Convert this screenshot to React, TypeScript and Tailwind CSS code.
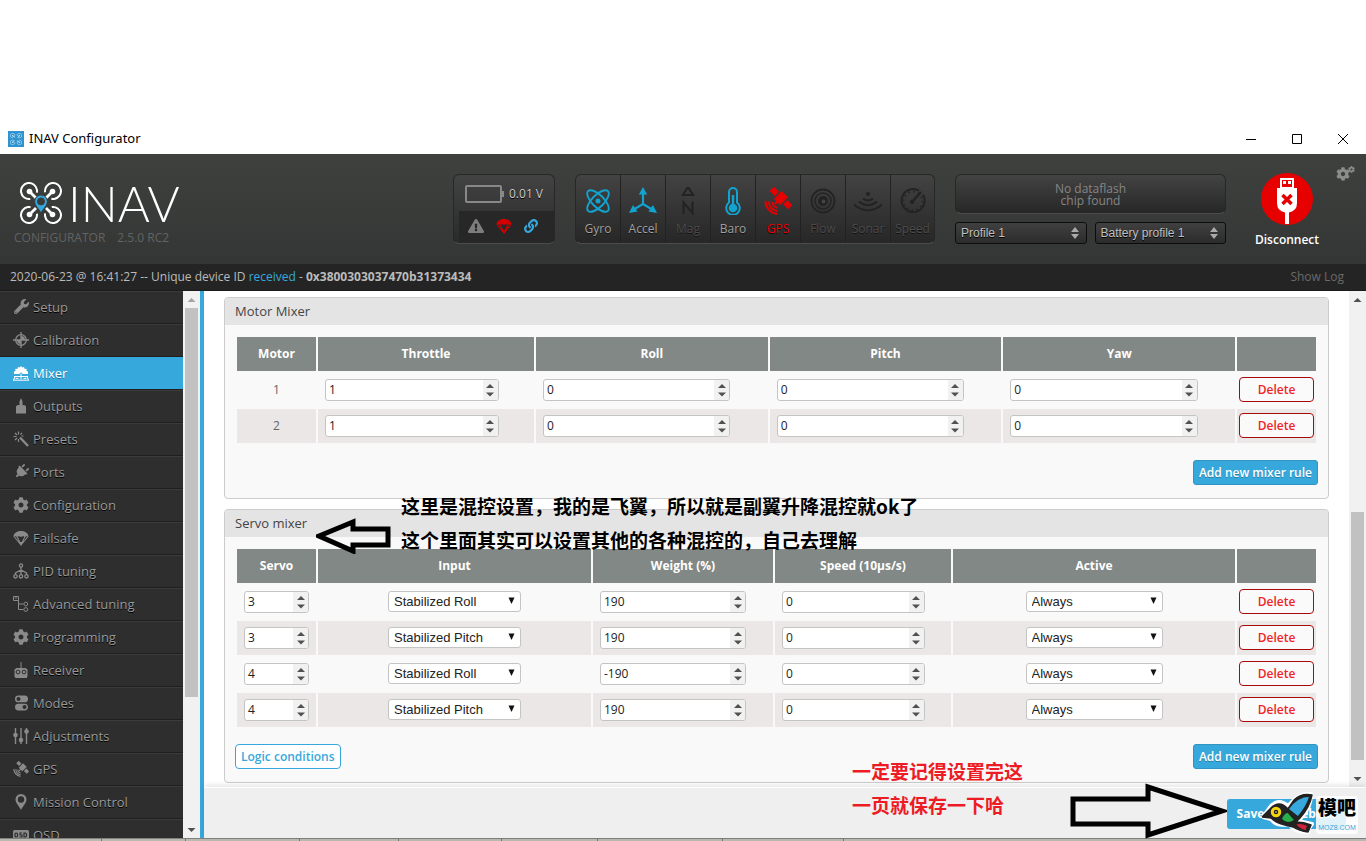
import React from "react";
import { FaWrench, FaMagic, FaPlug, FaCog, FaExclamationTriangle, FaLink } from "react-icons/fa";

const Parachute = ({ className }: { className?: string }) => (
  <svg viewBox="0 0 16 16" className={className} fill="currentColor">
    <path d="M.5 7C.5 3.500 3.500 1 8 1s7.500 2.500 7.500 6q-1.800-1.500-3.300 0Q10 5.500 8 7 6 5.500 3.800 7 2.300 5.500.5 7z" />
    <path d="M1 6.500 7.600 14.500M4 6.500l3.800 8M12 6.500l-3.800 8M15 6.500 8.400 14.500" stroke="currentColor" strokeWidth="1.100" fill="none" />
    <path d="M6.500 12h3l-.8 3.500H7.300z" />
  </svg>
);

const Satellite = ({ className }: { className?: string }) => (
  <svg viewBox="0 0 28 28" className={className} fill="currentColor">
    <g transform="rotate(45 17 11)">
      <path d="M4 8h7v6H4zM12.500 5.500h9v11h-9zM23 8h7v6h-7z" />
      <path d="M16 16h2v4h-2z" />
    </g>
    <path d="M8.500 15a5 5 0 0 0 5 5.500M5 14.500a9 9 0 0 0 8.500 9.500M1.500 14a13 13 0 0 0 11.500 13" fill="none" stroke="currentColor" strokeWidth="2" />
  </svg>
);

const Quad = ({ className, color }: { className?: string; color: string }) => (
  <svg viewBox="0 0 42 42" className={className} fill="none" stroke={color}>
    <g strokeWidth="2" strokeDasharray="40.300 10">
      <circle cx="9" cy="9" r="8" transform="rotate(81 9 9)" />
      <circle cx="33" cy="9" r="8" transform="rotate(171 33 9)" />
      <circle cx="33" cy="33" r="8" transform="rotate(261 33 33)" />
      <circle cx="9" cy="33" r="8" transform="rotate(-9 9 33)" />
    </g>
    <path d="m9 9 7 7M33 9l-7 7M9 33l7-7M33 33l-7-7" strokeWidth="2.800" />
    <g fill={color} stroke="none">
      <circle cx="9.500" cy="9.500" r="2.800" />
      <circle cx="32.500" cy="9.500" r="2.800" />
      <circle cx="9.500" cy="32.500" r="2.800" />
      <circle cx="32.500" cy="32.500" r="2.800" />
    </g>
  </svg>
);

const stroke = { fill: "none", stroke: "currentColor" } as const;

const icons: Record<string, React.ReactNode> = {
  Setup: <FaWrench className="size-[15px]" />,
  Calibration: (
    <svg viewBox="0 0 16 16" className="size-4">
      <g {...stroke} strokeWidth="1.300">
        <circle cx="8" cy="8" r="5.300" />
        <path d="M8 0v16M0 8h16" />
      </g>
      <path d="M8 8V4a4 4 0 0 1 4 4zM8 8v4a4 4 0 0 1-4-4z" fill="currentColor" />
    </svg>
  ),
  Mixer: (
    <svg viewBox="0 0 16 16" className="size-4">
      <path d="M1 9V6.500L2.500 6 2.300 3.800l2 .2.700-2 2 .5L8 .8l1 1.700 2-.5.700 2 2-.2-.2 2.200 1.500.5V9H9.500a1.500 1.500 0 0 0-3 0z" fill="currentColor" />
      <path d="M1 11.500h14M8 8.500v6M0 15.200h16M2.500 13.400h3M10.500 13.400h3M2 11.500l-1.500 3.500M14 11.500l1.500 3.500" {...stroke} strokeWidth="1" />
    </svg>
  ),
  Outputs: (
    <svg viewBox="0 0 16 16" className="size-4" fill="currentColor">
      <path d="M8 0 9.500 3.500v3.500l2.500.3 1 1.200v7H3v-7l1-1.200L6.500 7V3.500z" />
    </svg>
  ),
  Presets: (
    <svg viewBox="0 0 16 16" className="size-4" {...stroke}>
      <path d="m7 6.500 8 8.500" strokeWidth="2.400" />
      <path d="M5.500.5v3M5.500 8v3M.5 5.500h3M8.500 5h2M2 2l2 2M9 2 7.500 3.500M2 9l2-2" strokeWidth="1.200" />
    </svg>
  ),
  Ports: <FaPlug className="size-[15px] rotate-45" />,
  Configuration: <FaCog className="size-4" />,
  Failsafe: <Parachute className="size-4" />,
  "PID tuning": (
    <svg viewBox="0 0 16 16" className="size-4" {...stroke} strokeWidth="1.300">
      <circle cx="8" cy="2.500" r="1.600" />
      <circle cx="2.500" cy="13.300" r="1.700" />
      <circle cx="8" cy="13.300" r="1.700" />
      <circle cx="13.500" cy="13.300" r="1.700" />
      <path d="M8 4v7.500M2.500 11.500V10L8 7l5.500 3v1.500" />
    </svg>
  ),
  "Advanced tuning": (
    <svg viewBox="0 0 16 16" className="size-4" {...stroke} strokeWidth="1">
      <path d="M.5.500h5v4h-5zM2 2h2M5.500 4.500v9h5M5.500 8h5" />
      <circle cx="12.800" cy="8" r="1.900" />
      <circle cx="12.800" cy="13.500" r="1.900" />
    </svg>
  ),
  Programming: <FaCog className="size-4" />,
  Receiver: (
    <svg viewBox="0 0 16 16" className="size-4">
      <path d="M7.500 0h1v6h4l2 1.500v7l-1 1.500h-11l-1-1.500v-7l2-1.500h4z" fill="currentColor" />
      <g fill="currentColor" stroke="#2e2e2e" strokeWidth="1">
        <circle cx="5" cy="10" r="1.900" />
        <circle cx="11" cy="10" r="1.900" />
      </g>
    </svg>
  ),
  Modes: (
    <svg viewBox="0 0 16 16" className="size-4">
      <rect x="2" y=".5" width="13" height="6.800" rx="3.400" fill="currentColor" />
      <rect x="2" y="8.700" width="13" height="6.800" rx="3.400" fill="currentColor" />
      <circle cx="5.500" cy="3.900" r="2" fill="#2e2e2e" />
      <circle cx="11.500" cy="12.100" r="2" fill="#2e2e2e" />
    </svg>
  ),
  Adjustments: (
    <svg viewBox="0 0 16 16" className="size-4">
      <path d="M2.500 0v16M8 0v16M13.500 0v16" {...stroke} strokeWidth="1.400" />
      <circle cx="2.500" cy="7" r="2.300" fill="currentColor" />
      <circle cx="8" cy="12" r="2.300" fill="currentColor" />
      <circle cx="13.500" cy="3.500" r="2.300" fill="currentColor" />
    </svg>
  ),
  GPS: <Satellite className="size-4" />,
  "Mission Control": (
    <svg viewBox="0 0 16 16" className="size-4">
      <path fillRule="evenodd" d="M8 0a5.500 5.500 0 0 1 5.500 5.500C13.500 9 10 12 8 16 6 12 2.500 9 2.500 5.500A5.500 5.500 0 0 1 8 0zm0 2.300a3.200 3.200 0 1 0 0 6.400 3.200 3.200 0 0 0 0-6.400z" fill="currentColor" />
    </svg>
  ),
  OSD: (
    <svg viewBox="0 0 16 16" className="size-4">
      <rect x="0" y="3" width="16" height="10" rx="1.500" fill="currentColor" />
      <g fill="none" stroke="#2e2e2e" strokeWidth="1.200">
        <rect x="2" y="6" width="2.500" height="4" rx="1" />
        <path d="M9 6H7v2h2v2H6.500M11 6v4h1.500l1-1V7l-1-1z" />
      </g>
    </svg>
  ),
};

const Sidebar = () => (
  <aside className="flex w-51 shrink-0 border-r-4 border-[#37a8db]">
    <nav className="min-w-0 flex-1 overflow-hidden bg-[#2e2e2e]">
      <ul>
        {Object.keys(icons).map((name) => (
          <li key={name}>
            <a
              href="#"
              className={
                name === "Mixer"
                  ? "flex h-[33px] items-center gap-1 border-t border-b border-t-[#37a8db] border-b-[#1f1f1f] bg-[#37a8db] pb-0.5 pl-[13px] text-white [text-shadow:0_1px_rgba(0,0,0,0.3)]"
                  : "flex h-[33px] items-center gap-1 border-t border-b border-t-[#3b3b3b] border-b-[#1f1f1f] pb-0.5 pl-[13px] text-[#999] [text-shadow:0_1px_#000]"
              }
            >
              <span className={name === "Mixer" ? "flex w-4 justify-center" : "flex w-4 justify-center text-[#8a8a8a]"}>{icons[name]}</span>
              <span className="text-[13px] leading-4 whitespace-nowrap">{name}</span>
            </a>
          </li>
        ))}
      </ul>
    </nav>
    <Scrollbar dim thumb="mx-0.5 flex-[389] bg-[#c1c1c1]" before="flex-none" after="flex-[124]" />
  </aside>
);

const Scrollbar = ({ thumb, before, after, dim }: { thumb: string; before: string; after: string; dim?: boolean }) => (
  <div className="flex w-[17px] shrink-0 flex-col bg-[#f1f1f1]">
    <svg viewBox="0 0 17 17" className="h-[17px] shrink-0">
      <path d="M4.500 11h8l-4-4z" fill={dim ? "#a3a3a3" : "#505050"} />
    </svg>
    <div className={before} />
    <div className={thumb} />
    <div className={after} />
    <svg viewBox="0 0 17 17" className="h-[17px] shrink-0">
      <path d="M4.500 7h8l-4 4z" fill="#505050" />
    </svg>
  </div>
);

const NumberField = ({ value, label, className }: { value: string; label: string; className: string }) => (
  <div className={"flex h-[22px] overflow-hidden rounded-[3px] border border-[#c4c4c4] bg-white " + className}>
    <input
      type="number"
      aria-label={label}
      defaultValue={value}
      className="min-w-0 flex-1 pl-[3px] text-left text-xs text-[#222] outline-none [appearance:textfield] [&::-webkit-inner-spin-button]:appearance-none"
    />
    <span className="flex w-[15px] shrink-0 items-center justify-center bg-[#f1f1f1]">
      <svg viewBox="0 0 8 14" className="h-3.5 w-2" fill="#505050">
        <path d="M0 5h8L4 1zM0 9.500h8L4 13.500z" />
      </svg>
    </span>
  </div>
);

const SelectField = ({ options, label, className }: { options: string[]; label: string; className: string }) => (
  <div className={"relative mx-auto h-[21px] " + className}>
    <select
      aria-label={label}
      className="block h-full w-full appearance-none rounded-[3px] border border-[#c4c4c4] bg-white pl-[5px] font-['Liberation_Sans',Arial,sans-serif] text-[13px] leading-4 text-[#222]"
    >
      {options.map((o) => (
        <option key={o}>{o}</option>
      ))}
    </select>
    <svg viewBox="0 0 7 7" className="pointer-events-none absolute top-1.5 right-1.5 size-[7px]">
      <path d="M.5.500h6L3.500 7z" fill="#111" />
    </svg>
  </div>
);

const DeleteButton = () => (
  <button className="mx-auto block h-[25px] w-[75px] rounded border border-[#a70a0a] bg-[#fafafa] text-xs font-semibold text-[#f12525]">Delete</button>
);

const AddButton = () => (
  <button className="ml-auto h-[25px] rounded-[3px] border border-[#3294c1] bg-[#37a8db] px-[5px] text-xs font-semibold whitespace-nowrap text-white [text-shadow:0_1px_rgba(0,0,0,0.25)]">
    Add new mixer rule
  </button>
);

const Panel = ({ title, children }: { title: string; children: React.ReactNode }) => (
  <section className="rounded border border-[#ccc] bg-[#f9f9f9]">
    <h2 className="h-[27px] rounded-t bg-[#e4e4e4] px-2.5 text-[13px] leading-[27px] text-[#444]">{title}</h2>
    <div className="px-2.5 pt-2.5 pb-[13px]">{children}</div>
  </section>
);

const th = "bg-[#828885] p-0 text-center text-xs font-bold text-white";
const tableClass = "w-full table-fixed border-separate border-spacing-0.5 text-xs text-[#666]";
const rowClass = "h-[34px] even:bg-[#ebe7e6] [&>td]:pt-0 [&>td]:pb-px";

const MotorTable = () => (
  <table className={tableClass}>
    <colgroup>
      <col className="w-[79px]" />
      <col className="w-[216px]" />
      <col />
      <col />
      <col />
      <col className="w-[79px]" />
    </colgroup>
    <thead>
      <tr className="h-[34px]">
        {["Motor", "Throttle", "Roll", "Pitch", "Yaw", ""].map((h) => (
          <th key={h} className={th}>{h}</th>
        ))}
      </tr>
    </thead>
    <tbody>
      {["1", "2"].map((n) => (
        <tr key={n} className={rowClass}>
          <td className="text-center">{n}</td>
          {["Throttle", "Roll", "Pitch", "Yaw"].map((f) => (
            <td key={f} className="px-[7px]">
              <NumberField label={`${f} of motor ${n}`} value={f === "Throttle" ? "1" : "0"} className="w-[86%]" />
            </td>
          ))}
          <td><DeleteButton /></td>
        </tr>
      ))}
    </tbody>
  </table>
);

const servoRules = [
  { servo: "3", input: "Stabilized Roll", weight: "190" },
  { servo: "3", input: "Stabilized Pitch", weight: "190" },
  { servo: "4", input: "Stabilized Roll", weight: "-190" },
  { servo: "4", input: "Stabilized Pitch", weight: "190" },
];

const ServoTable = () => (
  <table className={tableClass}>
    <colgroup>
      <col className="w-[79px]" />
      <col className="w-[273px]" />
      <col className="w-[180px]" />
      <col className="w-[176px]" />
      <col />
      <col className="w-[79px]" />
    </colgroup>
    <thead>
      <tr className="h-[34px]">
        {["Servo", "Input", "Weight (%)", "Speed (10µs/s)", "Active", ""].map((h) => (
          <th key={h} className={th}>{h}</th>
        ))}
      </tr>
    </thead>
    <tbody>
      {servoRules.map((r, i) => (
        <tr key={i} className={rowClass}>
          <td className="px-[7px]"><NumberField label="Servo" value={r.servo} className="w-full" /></td>
          <td><SelectField label="Input" options={[r.input]} className="w-[133px]" /></td>
          <td className="px-[7px]"><NumberField label="Weight" value={r.weight} className="w-[88%]" /></td>
          <td className="px-[7px]"><NumberField label="Speed" value="0" className="w-[88%]" /></td>
          <td><SelectField label="Active" options={["Always"]} className="w-[137px]" /></td>
          <td><DeleteButton /></td>
        </tr>
      ))}
    </tbody>
  </table>
);

const sensors: { name: string; state: string; icon: React.ReactNode }[] = [
  {
    name: "Gyro",
    state: "on",
    icon: (
      <svg viewBox="0 0 28 28" className="size-7" {...stroke} strokeWidth="1.900">
        <ellipse cx="14" cy="14" rx="14" ry="6" transform="rotate(45 14 14)" />
        <ellipse cx="14" cy="14" rx="14" ry="6" transform="rotate(-45 14 14)" />
        <circle cx="14" cy="14" r="2.500" fill="currentColor" stroke="none" />
      </svg>
    ),
  },
  {
    name: "Accel",
    state: "on",
    icon: (
      <svg viewBox="0 0 28 28" className="size-7" fill="currentColor">
        <path d="M14 4v13L4 23M14 17l10 6" {...stroke} strokeWidth="2.200" />
        <path d="m14 0 4.200 7.500H9.800zM0 26l4-8 4.500 6.500zM28 26l-4-8-4.500 6.500z" />
      </svg>
    ),
  },
  {
    name: "Mag",
    state: "off",
    icon: (
      <svg viewBox="0 0 28 28" className="size-7" {...stroke} strokeWidth="2.200">
        <path d="m14 0 5 8H9z" />
        <path d="M9.500 27V15.500L18.500 26V14.500" />
      </svg>
    ),
  },
  {
    name: "Baro",
    state: "on",
    icon: (
      <svg viewBox="0 0 28 28" className="size-7">
        <path d="M10 15.500V5a4 4 0 0 1 8 0v10.500a6.800 6.800 0 1 1-8 0z" {...stroke} strokeWidth="2" />
        <circle cx="14" cy="21" r="4.300" fill="currentColor" />
        <path d="M14 8v12" {...stroke} strokeWidth="2.400" />
      </svg>
    ),
  },
  { name: "GPS", state: "bad", icon: <Satellite className="size-7" /> },
  {
    name: "Flow",
    state: "off",
    icon: (
      <svg viewBox="0 0 28 28" className="size-7" {...stroke} strokeWidth="1.800">
        <circle cx="14" cy="14" r="11.500" />
        <circle cx="14" cy="14" r="8" strokeWidth="1.500" />
        <circle cx="14" cy="14" r="4" fill="currentColor" />
        <circle cx="14.500" cy="14.500" r="1" stroke="#444" />
      </svg>
    ),
  },
  {
    name: "Sonar",
    state: "off",
    icon: (
      <svg viewBox="0 0 28 28" className="size-7" {...stroke} strokeWidth="2">
        <circle cx="14" cy="7" r="2" fill="currentColor" stroke="none" />
        <path d="M9 11.500q5 4 10 0M5 14.500q9 7.500 18 0M0 17.500q14 12 28 0" />
      </svg>
    ),
  },
  {
    name: "Speed",
    state: "off",
    icon: (
      <svg viewBox="0 0 28 28" className="size-7" {...stroke}>
        <path d="M20 3.700a11.500 11.500 0 1 0 4 4" strokeWidth="2" />
        <circle cx="14" cy="14" r="9.300" strokeWidth="2" strokeDasharray="1.300 3.570" />
        <path d="m13 15 9-10" strokeWidth="2.400" />
        <circle cx="13" cy="15" r="1.800" fill="currentColor" />
      </svg>
    ),
  },
];

const sensorTone: Record<string, string> = {
  on: "text-[#12a3cf]",
  off: "text-[#232323]",
  bad: "text-[#e60000]",
};
const labelTone: Record<string, string> = {
  on: "text-[#a0a0a0]",
  off: "text-[#4c4c4c]",
  bad: "text-[#e60000]",
};

const HeaderSelect = ({ value, label }: { value: string; label: string }) => (
  <div className="relative min-w-0 flex-1">
    <select
      aria-label={label}
      className="block h-[22px] w-full appearance-none rounded-[3px] border border-[#0c0c0c] bg-linear-to-b from-[#3f403f] to-[#2b2c2b] pl-[5px] font-['Liberation_Sans',Arial,sans-serif] text-xs text-[#c0c0c0] [text-shadow:0_1px_#000]"
    >
      <option>{value}</option>
    </select>
    <svg viewBox="0 0 8 12" className="pointer-events-none absolute top-[5px] right-2 h-3 w-2" fill="#aaa">
      <path d="M0 5h8L4 0zM0 7h8l-4 5z" />
    </svg>
  </div>
);

const Header = () => (
  <header className="flex h-[110px] shrink-0 items-start bg-linear-to-b from-[#3f413f] to-[#343635] pt-5 pr-[11px] pl-3.5">
    <div className="min-w-0 flex-1">
      <div className="flex h-[54px] items-center gap-1.5 pt-1 pl-1.5">
        <div className="relative size-[42px]">
          <Quad color="#fff" className="size-[42px]" />
          <svg viewBox="0 0 42 42" className="absolute inset-0 size-[42px]">
            <path fillRule="evenodd" d="M21 13a6.300 6.300 0 0 1 6.300 6.300C27.300 24 23 27 21 31c-2-4-6.300-7-6.300-11.700A6.300 6.300 0 0 1 21 13zm0 2.900a3.500 3.500 0 1 0 0 7 3.500 3.500 0 0 0 0-7z" fill="#37a8db" stroke="#393b3a" strokeWidth="1" />
          </svg>
        </div>
        <span className="font-['Lato',sans-serif] text-[49px] leading-[50px] font-light text-white">INAV</span>
      </div>
      <p className="flex gap-3 text-xs leading-5 whitespace-nowrap text-[#626362]">
        <span>CONFIGURATOR</span>
        <span>2.5.0 RC2</span>
      </p>
    </div>
    <div className="w-[102px] shrink-0 overflow-hidden rounded-md border border-[#272727] border-b-[#4c4c4c] bg-linear-to-b from-[#434343] to-[#2a2a2a]">
      <div className="flex h-9 items-center gap-[5px] pt-0.5 pl-[11px]">
        <svg viewBox="0 0 39 18" className="h-[18px] w-[39px]">
          <rect x="1" y="1" width="35" height="16" rx="1" {...stroke} strokeWidth="2" className="text-[#888]" />
          <path d="M37 6h2v6h-2z" fill="#888" />
        </svg>
        <span className="text-xs whitespace-nowrap text-[#ccc] [text-shadow:0_1px_#000]">0.01 V</span>
      </div>
      <div className="ml-[5px] flex h-8 items-center gap-3 bg-[#272727] pb-0.5 pl-[9px]">
        <FaExclamationTriangle className="size-4 text-[#7d7d7d]" />
        <Parachute className="size-4 text-[#d40000]" />
        <FaLink className="size-3.5 text-[#37a8db]" />
      </div>
    </div>
    <ul className="ml-5 flex h-[70px] shrink-0 overflow-hidden rounded-md border border-[#272727] border-b-[#4c4c4c] bg-linear-to-b from-[#434343] to-[#272727]">
      {sensors.map((s) => (
        <li key={s.name} className="flex w-[45px] flex-col items-center border-r border-[#222] pt-3 last:w-[43px] last:border-r-0">
          <span className={sensorTone[s.state]}>{s.icon}</span>
          <span className={"mt-1 text-xs leading-5 [text-shadow:0_1px_#111] " + labelTone[s.state]}>{s.name}</span>
        </li>
      ))}
    </ul>
    <div className="ml-5 w-[271px] shrink-0">
      <div className="flex h-10 flex-col justify-center rounded-md border border-[#272727] border-b-[#4c4c4c] bg-linear-to-b from-[#434343] to-[#272727] pt-px text-center text-xs leading-3 text-[#868686]">
        <span>No dataflash</span>
        <span>chip found</span>
      </div>
      <div className="mt-2 flex gap-2">
        <HeaderSelect label="Profile" value="Profile 1" />
        <HeaderSelect label="Battery profile" value="Battery profile 1" />
      </div>
    </div>
    <button className="ml-[30px] flex w-[62px] shrink-0 flex-col items-center text-xs text-white">
      <svg viewBox="0 0 52 52" className="-mt-px size-[52px]">
        <circle cx="26" cy="26" r="26" fill="#e60000" />
        <path fill="#fff" d="M19 5h14v10h3v15q0 8-8 9.500V51h-4V39.500Q16 38 16 30V15h3z" />
        <path fill="#e60000" d="M21 7h10v7H21z" />
        <path fill="#fff" d="M22 8h3v3h-3zM27 8h3v3h-3z" />
        <path d="m21.500 22 9 9M30.500 22l-9 9" stroke="#e60000" strokeWidth="3.500" />
      </svg>
      <span className="mt-[5px] leading-5 font-semibold">Disconnect</span>
    </button>
    <button aria-label="Options" className="-mt-2 ml-[18px] flex shrink-0 text-[#8c8c8c]">
      <FaCog className="mt-px size-3.5" />
      <FaCog className="-ml-0.5 size-[7px]" />
    </button>
  </header>
);

const Watermark = () => (
  <div className="pointer-events-none absolute right-2 bottom-1 flex items-end">
    <svg viewBox="0 0 54 42" className="h-[42px] w-[54px]" stroke="#222" strokeWidth="1.500" strokeLinejoin="round">
      <path d="M1 25 9 14q8-8 17 0L33 7Q41 1 49 2q0 14-10 24l-3 3 14 3-3 4-1 4q-14 0-19-8Q15 35 9 27z" stroke="#fff" strokeWidth="4" fill="#fff" />
      <path d="M0 25 8 17q9-10 18 0l6-9Q39 1 50 3q-2 12-12 23l-4 4q8 0 15 3l-3 7q-9-1-15-5l-8-2Q14 31 9 26z" fill="#222" />
      <path d="M26 17Q35 4 48 4q-3 11-12 21z" fill="#37a8db" />
      <path d="M19 27q3-7 7-7 4 5 7 8-8 6-14-1z" fill="#25ae4a" />
      <path d="M33 32q7-2 14 2-3 1-2 5-8-1-12-7z" fill="#d5203b" />
      <circle cx="14" cy="20" r="6" fill="#f5d512" />
      <circle cx="14" cy="20" r="1.500" fill="#fff" />
    </svg>
    <div className="flex flex-col items-center gap-1 rounded bg-white/85 px-0.5">
      <span className="font-['Noto_Sans_CJK_SC',sans-serif] text-[19px] leading-[22px] font-black text-black">模吧</span>
      <span className="font-['Liberation_Sans',sans-serif] text-[7px] leading-3 text-[#37a8db]">MOZ8.COM</span>
    </div>
  </div>
);

export default function App() {
  return (
    <div className="flex h-screen flex-col overflow-hidden bg-white font-['Open_Sans',sans-serif] text-[#333]">
      <div className="flex shrink-0 items-center justify-between pt-[123px]">
        <div className="flex h-[31px] items-center gap-[5px] pl-2 font-['Noto_Sans',sans-serif] text-[13px] text-black">
          <span className="bg-[#2f93cf] p-0.5">
            <Quad color="#bfe4f7" className="size-3" />
          </span>
          <span>INAV Configurator</span>
        </div>
        <div className="flex gap-9 pr-[18px] text-black">
          <button aria-label="Minimize">
            <svg viewBox="0 0 10 10" className="size-2.5"><path d="M0 5.500h10" stroke="#000" /></svg>
          </button>
          <button aria-label="Maximize">
            <svg viewBox="0 0 10 10" className="size-2.5"><path d="M.5.500h9v9h-9z" fill="none" stroke="#000" /></svg>
          </button>
          <button aria-label="Close">
            <svg viewBox="0 0 10 10" className="size-2.5"><path d="m0 0 10 10M10 0 0 10" stroke="#000" /></svg>
          </button>
        </div>
      </div>
      <Header />
      <div className="flex h-[27px] shrink-0 items-center justify-between border-b border-[#1b1b1b] bg-[#242424] px-2.5 text-xs text-[#bbb]">
        <p className="whitespace-nowrap">
          2020-06-23 @ 16:41:27 -- Unique device ID <span className="text-[#37a8db]">received</span> - <strong>0x3800303037470b31373434</strong>
        </p>
        <a href="#" className="pr-3 text-[#6a6a6a]">Show Log</a>
      </div>
      <div className="flex min-h-0 flex-1">
        <Sidebar />
        <main className="relative flex min-w-0 flex-1 flex-col">
          <div className="flex min-h-0 flex-1">
            <div className="flex min-w-0 flex-1 flex-col gap-2.5 overflow-hidden px-5 pt-1.5">
              <Panel title="Motor Mixer">
                <MotorTable />
                <div className="mt-[15px] flex">
                  <AddButton />
                </div>
              </Panel>
              <Panel title="Servo mixer">
                <ServoTable />
                <div className="mt-[15px] flex">
                  <button className="h-[25px] rounded border border-[#37a8db] bg-white px-[5px] text-xs font-semibold whitespace-nowrap text-[#37a8db]">
                    Logic conditions
                  </button>
                  <AddButton />
                </div>
              </Panel>
            </div>
            <Scrollbar before="flex-[204]" thumb="mx-0.5 flex-[248] bg-[#c1c1c1]" after="flex-[10]" />
          </div>
          <footer className="flex h-[51px] shrink-0 items-center justify-end border-t border-white bg-[#efefef] pt-px pr-5 shadow-[0_-2px_5px_rgba(0,0,0,0.1)]">
            <button className="h-[30px] rounded-[3px] bg-[#37a8db] px-2.5 text-xs font-bold whitespace-nowrap text-white">Save and Reboot</button>
          </footer>
          <svg viewBox="0 0 76 36" className="pointer-events-none absolute top-[227px] left-[112px] h-9 w-[76px]" fill="none" stroke="#000" strokeWidth="5">
            <path d="M3 18 37 4v7h35v16H37v6z" />
          </svg>
          <p className="pointer-events-none absolute top-[198px] left-[197px] font-['Noto_Sans_CJK_SC',sans-serif] text-[19px] leading-[34px] font-bold whitespace-nowrap text-black">
            这里是混控设置，我的是飞翼，所以就是副翼升降混控就ok了
            <br />
            这个里面其实可以设置其他的各种混控的，自己去理解
          </p>
          <p className="pointer-events-none absolute bottom-4 left-[648px] font-['Noto_Sans_CJK_SC',sans-serif] text-[19px] leading-[34px] font-bold whitespace-nowrap text-[#ed1c24]">
            一定要记得设置完这
            <br />
            一页就保存一下哈
          </p>
          <svg viewBox="0 0 158 56" className="pointer-events-none absolute right-[139px] bottom-[-1px] h-14 w-[158px]" fill="none" stroke="#000" strokeWidth="5">
            <path d="M4 16h75V4l74 24-74 24V41H4z" />
          </svg>
          <Watermark />
        </main>
      </div>
      <div className="flex h-[3px] shrink-0 border-t border-[#808080] bg-[#b9b9b0]">
        <div className="w-[102px] border-r border-[#777]" />
        <div className="w-[84px] border-r border-[#777]" />
        <div className="w-[114px] border-r border-[#777]" />
        <div className="w-[99px] border-r border-[#777]" />
        <div className="w-[103px] border-r border-[#777]" />
        <div className="w-[96px] border-r border-[#777]" />
        <div className="w-[125px] border-r border-[#777]" />
        <div className="w-[121px] border-r border-[#777]" />
      </div>
    </div>
  );
}
